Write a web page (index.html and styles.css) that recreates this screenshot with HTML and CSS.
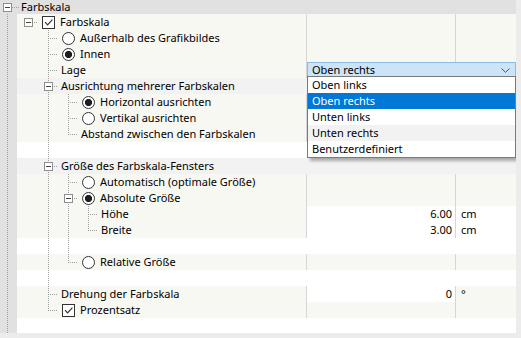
FILE: index.html
```html
<!DOCTYPE html>
<html lang="de">
<head>
<meta charset="utf-8">
<title>Farbskala</title>
<link rel="stylesheet" href="styles.css">
</head>
<body>
<div class="grid">
  <div class="hdr">
    <span class="hg"><i class="exp"></i></span><span class="hlbl">Farbskala</span>
  </div>

  <div class="row cream">
    <span class="strip"></span>
    <span class="name">
      <span class="g h"><i class="exp"></i></span>
      <span class="g b"><i class="chk"><svg viewBox="0 0 11 11" width="11" height="11"><path d="M2 5.2 L4.6 7.8 L9.4 2.6" fill="none" stroke="#333" stroke-width="1.2"/></svg></i></span>
      <span class="lbl li">Farbskala</span>
    </span>
    <span class="val"></span><span class="unit"></span>
  </div>

  <div class="row cream">
    <span class="strip"></span>
    <span class="name">
      <span class="g"></span><span class="g t"></span><span class="g"><i class="rad"></i></span>
      <span class="lbl li">Außerhalb des Grafikbildes</span>
    </span>
    <span class="val"></span><span class="unit"></span>
  </div>

  <div class="row cream">
    <span class="strip"></span>
    <span class="name">
      <span class="g"></span><span class="g t"></span><span class="g"><i class="rad on"></i></span>
      <span class="lbl li">Innen</span>
    </span>
    <span class="val"></span><span class="unit"></span>
  </div>

  <div class="row cream top">
    <span class="strip"></span>
    <span class="name">
      <span class="g"></span><span class="g t"></span>
      <span class="lbl">Lage</span>
    </span>
    <span class="combocell">
      <span class="combo">
        <span class="ctext">Oben rechts</span>
        <svg class="chev" viewBox="0 0 9 5" width="9" height="5"><path d="M0.5 0.5 L4.5 4.3 L8.5 0.5" fill="none" stroke="#555" stroke-width="1"/></svg>
        <span class="list">
          <span class="item">Oben links</span>
          <span class="item sel">Oben rechts</span>
          <span class="item">Unten links</span>
          <span class="item hov">Unten rechts</span>
          <span class="item">Benutzerdefiniert</span>
        </span>
      </span>
    </span>
  </div>

  <div class="row grp">
    <span class="strip"></span>
    <span class="name">
      <span class="g"></span><span class="g t"><i class="exp"></i></span>
      <span class="lbl">Ausrichtung mehrerer Farbskalen</span>
    </span>
    <span class="val"></span><span class="unit"></span>
  </div>

  <div class="row cream">
    <span class="strip"></span>
    <span class="name">
      <span class="g"></span><span class="g v"></span><span class="g t"></span><span class="g"><i class="rad on"></i></span>
      <span class="lbl li">Horizontal ausrichten</span>
    </span>
    <span class="val"></span><span class="unit"></span>
  </div>

  <div class="row cream">
    <span class="strip"></span>
    <span class="name">
      <span class="g"></span><span class="g v"></span><span class="g t"></span><span class="g"><i class="rad"></i></span>
      <span class="lbl li">Vertikal ausrichten</span>
    </span>
    <span class="val"></span><span class="unit"></span>
  </div>

  <div class="row cream">
    <span class="strip"></span>
    <span class="name">
      <span class="g"></span><span class="g v"></span><span class="g l"></span>
      <span class="lbl">Abstand zwischen den Farbskalen</span>
    </span>
    <span class="val"></span><span class="unit"></span>
  </div>

  <div class="row blank">
    <span class="strip"></span>
    <span class="name"><span class="g"></span><span class="g v"></span></span>
    <span class="val"></span><span class="unit"></span>
  </div>

  <div class="row grp">
    <span class="strip"></span>
    <span class="name">
      <span class="g"></span><span class="g t"><i class="exp"></i></span>
      <span class="lbl">Größe des Farbskala-Fensters</span>
    </span>
    <span class="val"></span><span class="unit"></span>
  </div>

  <div class="row cream">
    <span class="strip"></span>
    <span class="name">
      <span class="g"></span><span class="g v"></span><span class="g t"></span><span class="g"><i class="rad"></i></span>
      <span class="lbl li">Automatisch (optimale Größe)</span>
    </span>
    <span class="val"></span><span class="unit"></span>
  </div>

  <div class="row cream">
    <span class="strip"></span>
    <span class="name">
      <span class="g"></span><span class="g v"></span><span class="g t"><i class="exp"></i></span><span class="g b"><i class="rad on"></i></span>
      <span class="lbl li">Absolute Größe</span>
    </span>
    <span class="val"></span><span class="unit"></span>
  </div>

  <div class="row edit">
    <span class="strip"></span>
    <span class="name">
      <span class="g"></span><span class="g v"></span><span class="g v"></span><span class="g t"></span>
      <span class="lbl">Höhe</span>
    </span>
    <span class="val">6.00</span><span class="unit">cm</span>
  </div>

  <div class="row edit">
    <span class="strip"></span>
    <span class="name">
      <span class="g"></span><span class="g v"></span><span class="g v"></span><span class="g l"></span>
      <span class="lbl">Breite</span>
    </span>
    <span class="val">3.00</span><span class="unit">cm</span>
  </div>

  <div class="row blank">
    <span class="strip"></span>
    <span class="name"><span class="g"></span><span class="g v"></span><span class="g v"></span></span>
    <span class="val"></span><span class="unit"></span>
  </div>

  <div class="row cream">
    <span class="strip"></span>
    <span class="name">
      <span class="g"></span><span class="g v"></span><span class="g l"></span><span class="g"><i class="rad"></i></span>
      <span class="lbl li">Relative Größe</span>
    </span>
    <span class="val"></span><span class="unit"></span>
  </div>

  <div class="row blank">
    <span class="strip"></span>
    <span class="name"><span class="g"></span><span class="g v"></span></span>
    <span class="val"></span><span class="unit"></span>
  </div>

  <div class="row edit2">
    <span class="strip"></span>
    <span class="name">
      <span class="g"></span><span class="g t"></span>
      <span class="lbl">Drehung der Farbskala</span>
    </span>
    <span class="val">0</span><span class="unit">°</span>
  </div>

  <div class="row cream">
    <span class="strip"></span>
    <span class="name">
      <span class="g"></span><span class="g l"></span><span class="g"><i class="chk"><svg viewBox="0 0 11 11" width="11" height="11"><path d="M2 5.2 L4.6 7.8 L9.4 2.6" fill="none" stroke="#333" stroke-width="1.2"/></svg></i></span>
      <span class="lbl li">Prozentsatz</span>
    </span>
    <span class="val"></span><span class="unit"></span>
  </div>

  <div class="fill"><span class="strip"></span></div>
</div>
</body>
</html>
```

FILE: styles.css
```css
* { box-sizing: border-box; margin: 0; padding: 0; }
html, body { width: 521px; height: 338px; overflow: hidden; }
body {
  background: #ececec;
  font-family: "Noto Sans", "Open Sans", sans-serif;
  font-size: 11px;
  color: #000;
}
i { font-style: normal; display: block; }

.grid {
  width: 516px;
  height: 333px;
  background: #fff;
  display: flex;
  flex-direction: column;
  overflow: hidden;
}

.hdr {
  height: 14px;
  flex: none;
  background: #e1e1e1;
  display: flex;
  align-items: center;
}
.hg {
  width: 19px;
  height: 14px;
  flex: none;
  display: flex;
  align-items: center;
  padding-left: 3px;
  background: repeating-linear-gradient(to right, #a0a0a0 0 1px, transparent 1px 2px) 12px 7px / 7px 1px no-repeat;
}
.hlbl { margin-left: 2px; line-height: 14px; }

.row {
  height: 16px;
  flex: none;
  display: flex;
}
.fill { flex: 1; display: flex; }

.strip {
  width: 17px;
  flex: none;
  background:
    repeating-linear-gradient(#a0a0a0 0 1px, transparent 1px 2px) 7px 0 / 1px 100% no-repeat,
    #e1e1e1;
}

.name {
  width: 289px;
  flex: none;
  display: flex;
  align-items: center;
  padding-left: 1px;
  white-space: nowrap;
}
.val {
  width: 149px;
  flex: none;
  border-left: 1px solid #d6d6d6;
  text-align: right;
  padding-right: 3px;
  line-height: 16px;
}
.unit {
  width: 61px;
  flex: none;
  border-left: 1px solid #d6d6d6;
  padding-left: 5px;
  line-height: 16px;
}

.cream .name, .cream .val, .cream .unit { background: #f8f8f3; }
.grp { background: #f2f2f2; }
.grp .val, .grp .unit, .blank .val, .blank .unit { border-left-color: transparent; }
.blank { background: #fff; }
.edit .name { background: #f8f8f3; }
.edit .val, .edit .unit { background: #fff; }
.edit2 .name, .edit2 .unit { background: #f8f8f3; }
.edit2 .val { background: #fff; }

.lbl { margin-left: 3px; line-height: 16px; }
.lbl.li { margin-left: 2px; }

/* tree guide cells */
.g {
  width: 20px;
  height: 16px;
  flex: none;
  display: flex;
  align-items: center;
  justify-content: center;
}
.v { background: repeating-linear-gradient(#a0a0a0 0 1px, transparent 1px 2px) 10px 0 / 1px 16px no-repeat; }
.t {
  background:
    repeating-linear-gradient(to right, #a0a0a0 0 1px, transparent 1px 2px) 10px 8px / 10px 1px no-repeat,
    repeating-linear-gradient(#a0a0a0 0 1px, transparent 1px 2px) 10px 0 / 1px 16px no-repeat;
}
.l {
  background:
    repeating-linear-gradient(to right, #a0a0a0 0 1px, transparent 1px 2px) 10px 8px / 10px 1px no-repeat,
    repeating-linear-gradient(#a0a0a0 0 1px, transparent 1px 2px) 10px 0 / 1px 8px no-repeat;
}
.b { background: repeating-linear-gradient(#a0a0a0 0 1px, transparent 1px 2px) 10px 8px / 1px 8px no-repeat; }
.h { background: repeating-linear-gradient(to right, #a0a0a0 0 1px, transparent 1px 2px) 10px 8px / 10px 1px no-repeat; }

.exp {
  width: 9px;
  height: 9px;
  border: 1px solid #8e8e8e;
  background: linear-gradient(#444, #444) 1px 3px / 5px 1px no-repeat, #fff;
}
.chk {
  width: 13px;
  height: 13px;
  border: 1px solid #333;
  background: #fff;
}
.chk svg { display: block; }
.rad {
  width: 13px;
  height: 13px;
  border: 1px solid #333;
  border-radius: 50%;
  background: #fff;
}
.rad.on { background: radial-gradient(circle, #1e1e1e 0 3.3px, #fff 3.9px); }

/* combo box */
.combocell {
  width: 210px;
  flex: none;
  border-left: 1px solid #d6d6d6;
  background: #f8f8f3;
}
.combo {
  position: relative;
  display: flex;
  align-items: center;
  justify-content: space-between;
  height: 16px;
  padding: 0 4px 0 4px;
  background: #cce4f7;
  border: 1px solid #8cbbe6;
  z-index: 2;
}
.ctext { line-height: 14px; }
.chev { display: block; margin-right: 1px; }
.list {
  position: absolute;
  left: -1px;
  top: 13px;
  width: 209px;
  background: #fff;
  border: 1px solid #7a7a7a;
  box-shadow: 3px 3px 3px rgba(0, 0, 0, 0.3);
  display: flex;
  flex-direction: column;
}
.item {
  height: 16px;
  line-height: 16px;
  padding-left: 4px;
}
.item.sel { background: #0078d7; color: #fff; }
.item.hov { background: #f2f2f2; }
```
